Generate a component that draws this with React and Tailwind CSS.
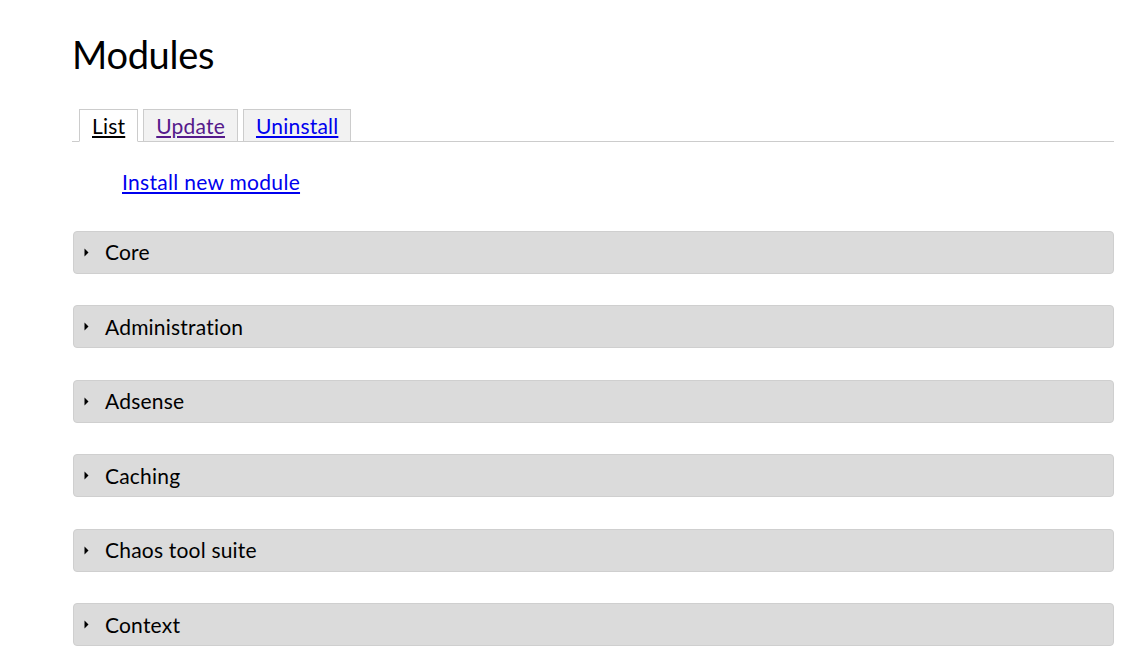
import React from 'react';

const modules = ['Core', 'Administration', 'Adsense', 'Caching', 'Chaos tool suite', 'Context'];

const ModuleGroup = ({ name }) => (
  <div className="h-[43px] rounded-[4px] border border-[#cfcfcf] bg-[#dbdbdb] flex items-center pl-[9px]">
    <svg width="6" height="9" viewBox="0 0 6 9" className="mr-[16px]">
      <path d="M1.5 0.5 L5.5 4.5 L1.5 8.5 Z" fill="#000" />
    </svg>
    <span className="text-[21px] tracking-[0.2px] text-black">{name}</span>
  </div>
);

const App = () => {
  return (
    <div className="min-h-screen bg-white font-['Lato','Liberation_Sans',sans-serif]">
      <div className="pl-[72px] pr-[21px] pt-[28px]">
        <h1 className="text-[38px] leading-[52px] tracking-[-0.3px] text-black">Modules</h1>

        <div className="mt-[29px] flex items-end gap-[5px] border-b border-[#cccccc] pl-[7px]">
          <div className="h-[33px] -mb-px border border-[#cccccc] border-b-white bg-white px-[12px] flex items-center">
            <a href="#" className="text-[21px] tracking-[0.2px] text-black underline">List</a>
          </div>
          <div className="h-[32px] border border-b-0 border-[#cccccc] bg-[#f2f2f2] px-[12px] flex items-center">
            <a href="#" className="text-[21px] tracking-[0.2px] text-[#551a8b] underline">Update</a>
          </div>
          <div className="h-[32px] border border-b-0 border-[#cccccc] bg-[#f2f2f2] px-[12px] flex items-center">
            <a href="#" className="text-[21px] tracking-[0.2px] text-[#0000ee] underline">Uninstall</a>
          </div>
        </div>

        <div className="pl-[50px] pt-[24px]">
          <a href="#" className="text-[21px] tracking-[0.3px] text-[#0000ee] underline">Install new module</a>
        </div>

        <div className="mt-[33px] flex flex-col gap-[31.5px] pl-px">
          {modules.map((m) => (
            <ModuleGroup key={m} name={m} />
          ))}
        </div>
      </div>
    </div>
  );
};

export default App;
